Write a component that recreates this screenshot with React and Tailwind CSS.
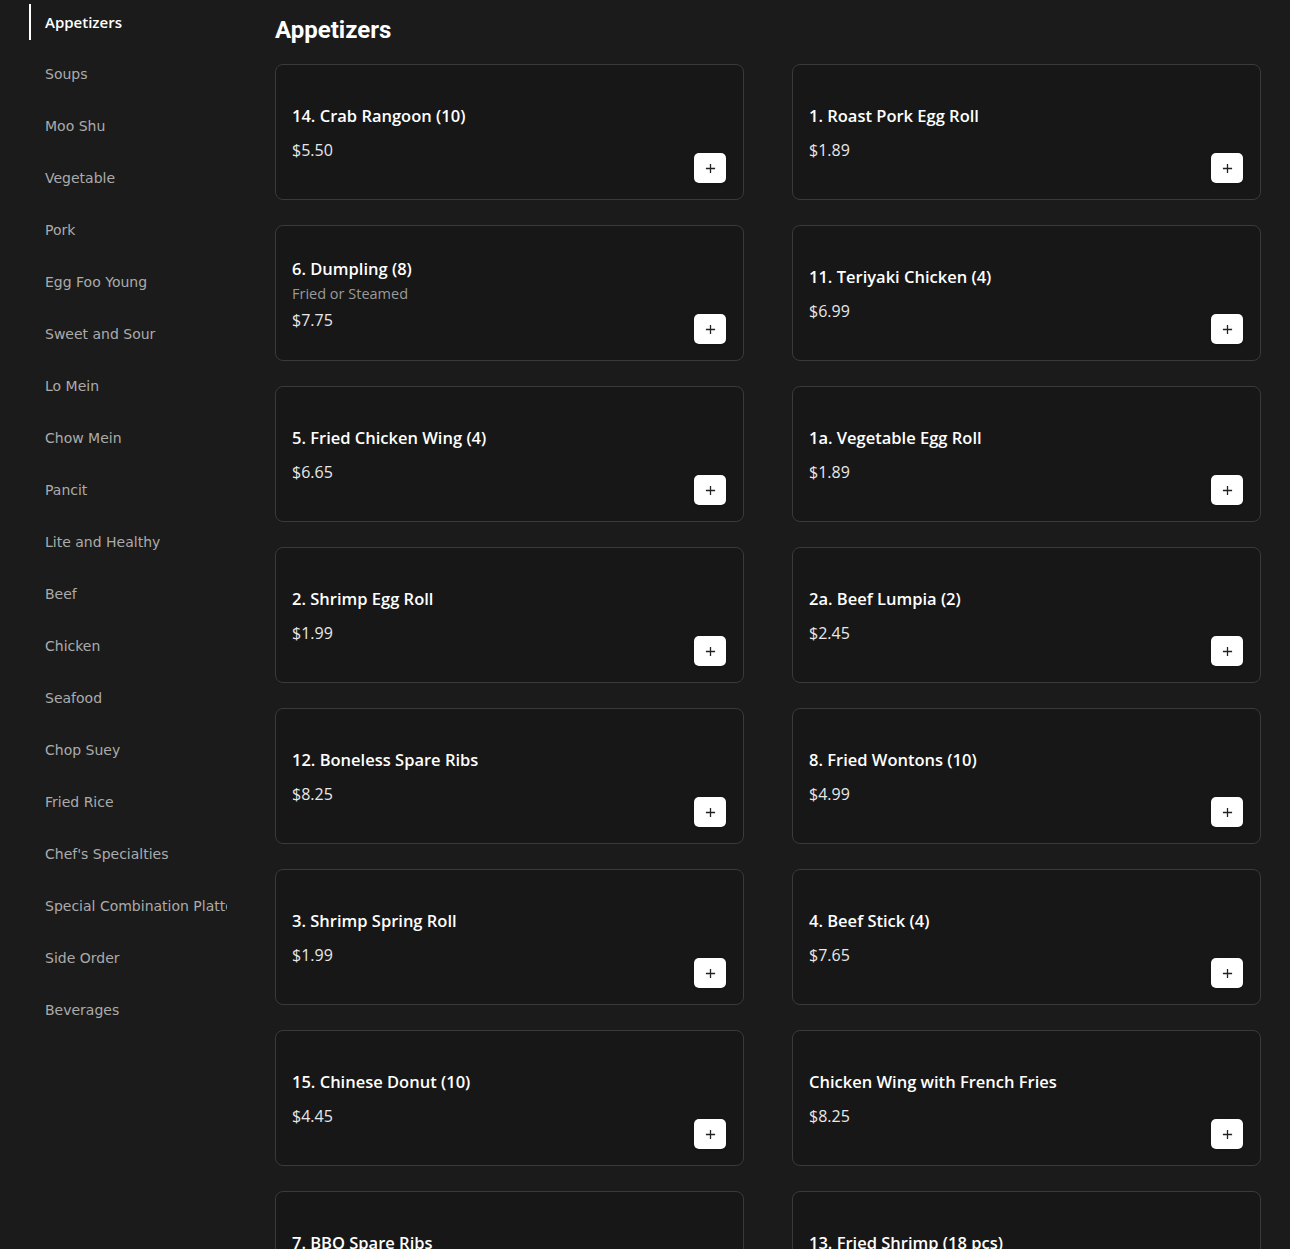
import React from 'react';

const categories = [
  'Appetizers', 'Soups', 'Moo Shu', 'Vegetable', 'Pork', 'Egg Foo Young', 'Sweet and Sour',
  'Lo Mein', 'Chow Mein', 'Pancit', 'Lite and Healthy', 'Beef', 'Chicken', 'Seafood',
  'Chop Suey', 'Fried Rice', "Chef's Specialties", 'Special Combination Platters', 'Side Order', 'Beverages',
];

const items = [
  { name: '14. Crab Rangoon (10)', price: '$5.50' },
  { name: '1. Roast Pork Egg Roll', price: '$1.89' },
  { name: '6. Dumpling (8)', desc: 'Fried or Steamed', price: '$7.75' },
  { name: '11. Teriyaki Chicken (4)', price: '$6.99' },
  { name: '5. Fried Chicken Wing (4)', price: '$6.65' },
  { name: '1a. Vegetable Egg Roll', price: '$1.89' },
  { name: '2. Shrimp Egg Roll', price: '$1.99' },
  { name: '2a. Beef Lumpia (2)', price: '$2.45' },
  { name: '12. Boneless Spare Ribs', price: '$8.25' },
  { name: '8. Fried Wontons (10)', price: '$4.99' },
  { name: '3. Shrimp Spring Roll', price: '$1.99' },
  { name: '4. Beef Stick (4)', price: '$7.65' },
  { name: '15. Chinese Donut (10)', price: '$4.45' },
  { name: 'Chicken Wing with French Fries', price: '$8.25' },
  { name: '7. BBQ Spare Ribs', price: '$10.95' },
  { name: '13. Fried Shrimp (18 pcs)', price: '$8.95' },
];

const cardFont = { fontFamily: '"Open Sans", "Liberation Sans", sans-serif' };

function MenuCard({ item }) {
  return (
    <div className="relative h-[136px] rounded-lg border border-[#3a3a3a] bg-[#171717] px-4 pt-0.5 flex flex-col justify-center" style={cardFont}>
      <div className="text-[16.5px] font-semibold text-white leading-6">{item.name}</div>
      {item.desc && <div className="text-[14.5px] text-[#9a9a9a] leading-5 mt-[3px]">{item.desc}</div>}
      <div className={`text-[16px] text-[#e8e8e8] leading-6 ${item.desc ? 'mt-1' : 'mt-2.5'}`}>{item.price}</div>
      <button className="absolute right-[17px] bottom-4 w-8 h-[30px] rounded-[5px] bg-white flex items-center justify-center shadow">
        <svg width="11" height="11" viewBox="0 0 12 12">
          <path d="M6 1v10M1 6h10" stroke="#222" strokeWidth="1.4" />
        </svg>
      </button>
    </div>
  );
}

export default function App() {
  return (
    <div className="min-h-screen h-[1249px] overflow-hidden bg-[#1b1b1b] flex">
      {/* Sidebar */}
      <aside className="w-[227px] shrink-0 pl-[29px] pt-1 overflow-hidden" style={{ fontFamily: '"DejaVu Sans", sans-serif' }}>
        {categories.map((c, i) => (
          <div key={c} className={`h-9 mb-4 flex items-center pl-[14px] whitespace-nowrap ${i === 0 ? 'border-l-2 border-white text-white' : 'border-l-2 border-transparent text-[#ababab]'}`}>
            {i === 0 ? (
              <span className="text-[15px] font-semibold" style={cardFont}>{c}</span>
            ) : (
              <span className="text-[14px]">{c}</span>
            )}
          </div>
        ))}
      </aside>

      {/* Content */}
      <main className="flex-1 pl-[48px] pr-[29px]">
        <h1 className="text-[24px] font-bold text-white pt-[15px] leading-[30px] mb-[19px]" style={{ fontFamily: 'Roboto, sans-serif' }}>Appetizers</h1>
        <div className="grid grid-cols-2 gap-x-12 gap-y-[25px]">
          {items.map((it) => (
            <MenuCard key={it.name} item={it} />
          ))}
        </div>
      </main>
    </div>
  );
}
